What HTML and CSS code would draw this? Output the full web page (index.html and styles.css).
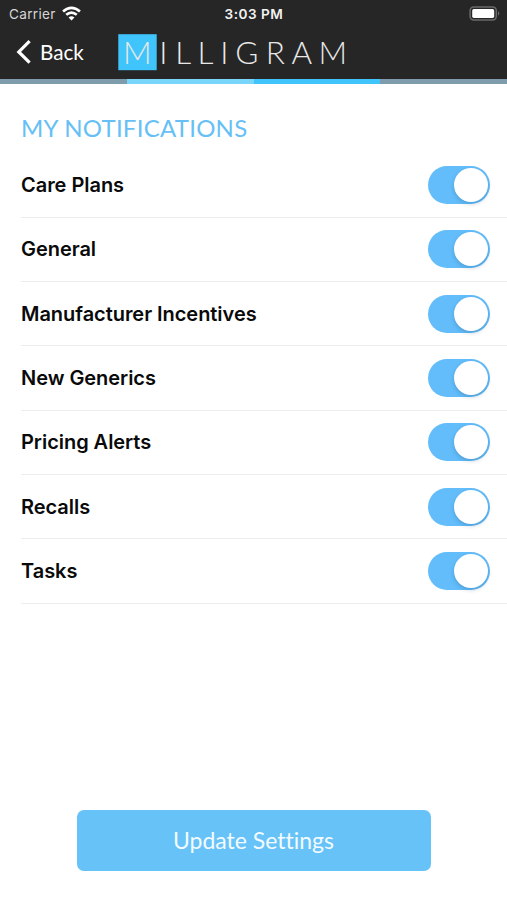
FILE: index.html
```html
<!DOCTYPE html>
<html lang="en">
<head>
<meta charset="utf-8">
<title>Milligram – My Notifications</title>
<link rel="stylesheet" href="styles.css">
</head>
<body>
<div class="screen">
  <header class="header">
    <div class="status">
      <div class="status-left">
        <span class="carrier">Carrier</span>
        <svg class="wifi" width="19" height="15" viewBox="0 0 18 14" fill="none" stroke="#fff" stroke-width="2.5">
          <path d="M1 5.1 Q9 -1.9 17 5.1"/>
          <path d="M4 8.3 Q9 4 14 8.3"/>
          <path d="M9 13.6 L6.2 10.8 Q9 8.6 11.8 10.8 Z" fill="#fff" stroke="none"/>
        </svg>
      </div>
      <span class="time">3:03 PM</span>
      <svg class="battery" width="32" height="16" viewBox="0 0 32 16">
        <rect x="1.1" y="1.1" width="26.2" height="12.8" rx="3.6" fill="#262626" stroke="#6a6a6a" stroke-width="1.5"/>
        <rect x="3.2" y="3.1" width="22" height="8.8" rx="1.6" fill="#fff"/>
        <path d="M29 5.3 Q31.6 7.5 29 9.7 Z" fill="#6a6a6a"/>
      </svg>
    </div>
    <div class="nav">
      <div class="back">
        <svg width="17" height="26" viewBox="0 0 17 26" fill="none" stroke="#fff" stroke-width="3.2">
          <path d="M15.6 2.2 L4.8 12.9 L15.6 23.6"/>
        </svg>
        <span>Back</span>
      </div>
      <svg class="logo" width="236" height="37" viewBox="0 0 236 37">
        <rect x="0.3" y="0.2" width="38.4" height="36" fill="#3fc5fb"/>
        <text class="logo-text" y="30.2" x="5 41.2 57.2 79.6 102.2 117.2 147.8 173.6 200.4">MILLIGRAM</text>
      </svg>
    </div>
  </header>
  <div class="stripe"><i class="s1"></i><i class="s2"></i><i class="s3"></i><i class="s1"></i></div>
  <main class="content">
    <h1 class="title">MY NOTIFICATIONS</h1>
    <ul class="list">
      <li class="row"><span>Care Plans</span><span class="toggle"><i></i></span></li>
      <li class="row"><span>General</span><span class="toggle"><i></i></span></li>
      <li class="row"><span>Manufacturer Incentives</span><span class="toggle"><i></i></span></li>
      <li class="row"><span>New Generics</span><span class="toggle"><i></i></span></li>
      <li class="row"><span>Pricing Alerts</span><span class="toggle"><i></i></span></li>
      <li class="row"><span>Recalls</span><span class="toggle"><i></i></span></li>
      <li class="row"><span>Tasks</span><span class="toggle"><i></i></span></li>
    </ul>
    <button class="update">Update Settings</button>
  </main>
</div>
</body>
</html>
```
FILE: styles.css
```css
* { box-sizing: border-box; }
body { margin: 0; background: #fff; }
.screen {
  width: 507px;
  height: 900px;
  display: flex;
  flex-direction: column;
  overflow: hidden;
}
.header { height: 78.5px; background: #262626; color: #fff; flex: none; }
.status {
  height: 27px;
  display: grid;
  grid-template-columns: 1fr auto 1fr;
  align-items: center;
  padding: 0 6px 0 9px;
  font-family: Inter, sans-serif;
}
.status-left { display: flex; align-items: center; gap: 6px; }
.carrier { font-size: 13.6px; color: #d6d6d6; letter-spacing: 0.3px; }
.wifi { display: block; }
.time { font-size: 13.6px; font-weight: 600; letter-spacing: 0.5px; color: #f2f2f2; margin-right: 2px; }
.battery { display: block; justify-self: end; }
.nav { display: flex; align-items: center; height: 50px; padding-left: 14px; }
.back {
  display: flex;
  align-items: center;
  gap: 9px;
  width: 104px;
  font: 400 20.7px Lato, sans-serif;
}
.logo { display: block; }
.logo-text { font: 300 31.5px Lato, sans-serif; fill: #e8e8e8; }
.stripe { display: flex; height: 5.5px; flex: none; }
.stripe i { flex: 1; }
.s1 { background: #7f9cad; }
.s2 { background: #7ad5fb; }
.s3 { background: #3fc5fb; }
.content { display: flex; flex-direction: column; flex: 1; }
.title {
  margin: 28px 0 0 21px;
  height: 31px;
  font: 400 24px/31px Lato, sans-serif;
  letter-spacing: 0.25px;
  color: #66c0f5;
}
.list { list-style: none; margin: 10.4px 0 0 21px; padding: 0; }
.row {
  display: flex;
  align-items: center;
  justify-content: space-between;
  height: 64.35px;
  padding-right: 17px;
  border-bottom: 1.5px solid #ededed;
  font: 600 20px Inter, sans-serif;
  letter-spacing: -0.04px;
  color: #0a0a0a;
}
.toggle {
  display: flex;
  justify-content: flex-end;
  align-items: center;
  width: 62.5px;
  height: 38px;
  padding-right: 2px;
  border-radius: 19px;
  background: #62bdfa;
}
.toggle i {
  width: 34px;
  height: 34px;
  border-radius: 50%;
  background: #fff;
  box-shadow: 0 2px 4px rgba(0, 40, 80, 0.2);
}
.update {
  align-self: center;
  width: 354px;
  height: 61px;
  margin: auto 0 29.5px;
  padding: 0;
  border: 0;
  border-radius: 7px;
  background: #67c2f8;
  color: #f2fbff;
  font: 400 23px Lato, sans-serif;
  font-variant-ligatures: none;
}
```
